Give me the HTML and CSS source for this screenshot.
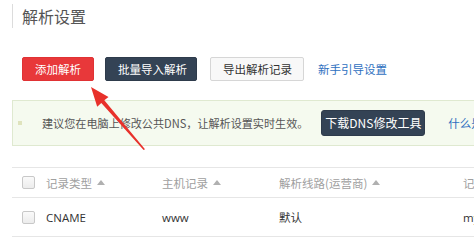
FILE: index.html
```html
<!DOCTYPE html>
<html lang="zh-CN">
<head>
<meta charset="utf-8">
<title>解析设置</title>
<link rel="stylesheet" href="styles.css">
</head>
<body>
<div class="page">
  <h1 class="title">解析设置</h1>
  <div class="toolbar">
    <button class="btn btn-red">添加解析</button>
    <button class="btn btn-navy">批量导入解析</button>
    <button class="btn btn-white">导出解析记录</button>
    <a class="link guide">新手引导设置</a>
  </div>
  <div class="notice">
    <span class="dot"></span>
    <span class="notice-text">建议您在电脑上修改公共DNS，让解析设置实时生效。</span>
    <button class="btn btn-navy btn-dl">下载DNS修改工具</button>
    <a class="link notice-link">什么是公共DNS？</a>
  </div>
  <div class="table">
    <div class="row head">
      <span class="cell c0"><span class="cb"></span></span>
      <span class="cell c1">记录类型 <span class="sort"></span></span>
      <span class="cell c2">主机记录 <span class="sort"></span></span>
      <span class="cell c3">解析线路(运营商) <span class="sort"></span></span>
      <span class="cell c4">记录值</span>
    </div>
    <div class="row">
      <span class="cell c0"><span class="cb"></span></span>
      <span class="cell c1 latin">CNAME</span>
      <span class="cell c2 latin">www</span>
      <span class="cell c3">默认</span>
      <span class="cell c4 latin">mysite.example.com</span>
    </div>
    <div class="row">
      <span class="cell c0"><span class="cb"></span></span>
      <span class="cell c1"></span>
    </div>
  </div>
  <svg class="arrow" width="474" height="248" viewBox="0 0 474 248">
    <path d="M91 87 L108.5 97 L104.3 100.3 L145 149.2 L143.6 150 L101.3 102.9 L97.2 106.8 Z" fill="#e8312b"/>
  </svg>
</div>
</body>
</html>
```

FILE: styles.css
```css
html, body {
  margin: 0;
  padding: 0;
  background: #fff;
  overflow: hidden;
}
body {
  font-family: "Noto Sans CJK SC", "Open Sans", sans-serif;
  font-size: 11.5px;
  color: #333;
}
.page {
  position: relative;
  width: 474px;
  height: 248px;
  padding-left: 12px;
  box-sizing: border-box;
  overflow: hidden;
}
.title {
  margin: 4px 0 0;
  height: 24px;
  line-height: 24px;
  border-left: 1px solid #dcdcdc;
  padding-left: 9px;
  font-size: 16px;
  font-weight: normal;
  color: #555;
}
.toolbar {
  margin-top: 29px;
  padding-left: 10px;
  display: flex;
  align-items: center;
}
.btn {
  height: 24px;
  padding: 0 12px;
  border: 1px solid transparent;
  border-radius: 2px;
  font-family: inherit;
  font-size: 11.5px;
  line-height: 22px;
  white-space: nowrap;
  flex: none;
}
.btn-red {
  background: #e8383a;
  border-color: #e03234;
  color: #fff;
  width: 72px;
}
.btn-navy {
  background: #344355;
  border-color: #2e3b4b;
  color: #fff;
}
.toolbar .btn-navy {
  margin-left: 11px;
  width: 92px;
}
.btn-white {
  margin-left: 13px;
  width: 94px;
  background: #f8f8f8;
  border-color: #d6d6d6;
  color: #333;
}
.link {
  color: #2e6fc0;
  white-space: nowrap;
}
.guide {
  margin-left: 14px;
}
.notice {
  margin-top: 19px;
  width: 462px;
  height: 46px;
  box-sizing: border-box;
  border: 1px solid #dfe9d0;
  border-right: none;
  background: #f5faef;
  display: flex;
  align-items: center;
  color: #555;
  overflow: hidden;
}
.dot {
  width: 4px;
  height: 4px;
  margin-left: 5px;
  background: #dfe3bd;
  flex: none;
}
.notice-text {
  margin-left: 20px;
  white-space: nowrap;
  flex: none;
  font-size: 11.1px;
}
.btn-dl {
  margin-left: 13px;
  height: 26px;
  width: 104px;
  padding: 0;
  font-size: 12px;
  border-radius: 3px;
}
.notice-link {
  margin-left: 23px;
  flex: none;
}
.table {
  margin-top: 21px;
  width: 462px;
  border-top: 1px solid #e6e6e6;
  overflow: hidden;
}
.row {
  display: flex;
  align-items: center;
  height: 38px;
  border-bottom: 1px solid #e6e6e6;
}
.row.head {
  height: 29px;
  color: #a0a0a0;
}
.cell {
  flex: none;
  white-space: nowrap;
  display: flex;
  align-items: center;
}
.c0 {
  width: 34px;
  padding-left: 10px;
  box-sizing: border-box;
}
.c1 { width: 116px; }
.c2 { width: 117px; }
.c3 { width: 184px; }
.c4 { width: 150px; }
.latin {
  font-family: "Open Sans", "Noto Sans CJK SC", sans-serif;
}
.cb {
  width: 11px;
  height: 11px;
  border: 1px solid #c8c8c8;
  border-radius: 2px;
  background: linear-gradient(#fafafa, #ececec);
}
.sort {
  margin-left: 5px;
  width: 0;
  height: 0;
  border-left: 4px solid transparent;
  border-right: 4px solid transparent;
  border-bottom: 5px solid #b0b0b0;
}
.arrow {
  position: absolute;
  left: 0;
  top: 0;
  pointer-events: none;
}
```
